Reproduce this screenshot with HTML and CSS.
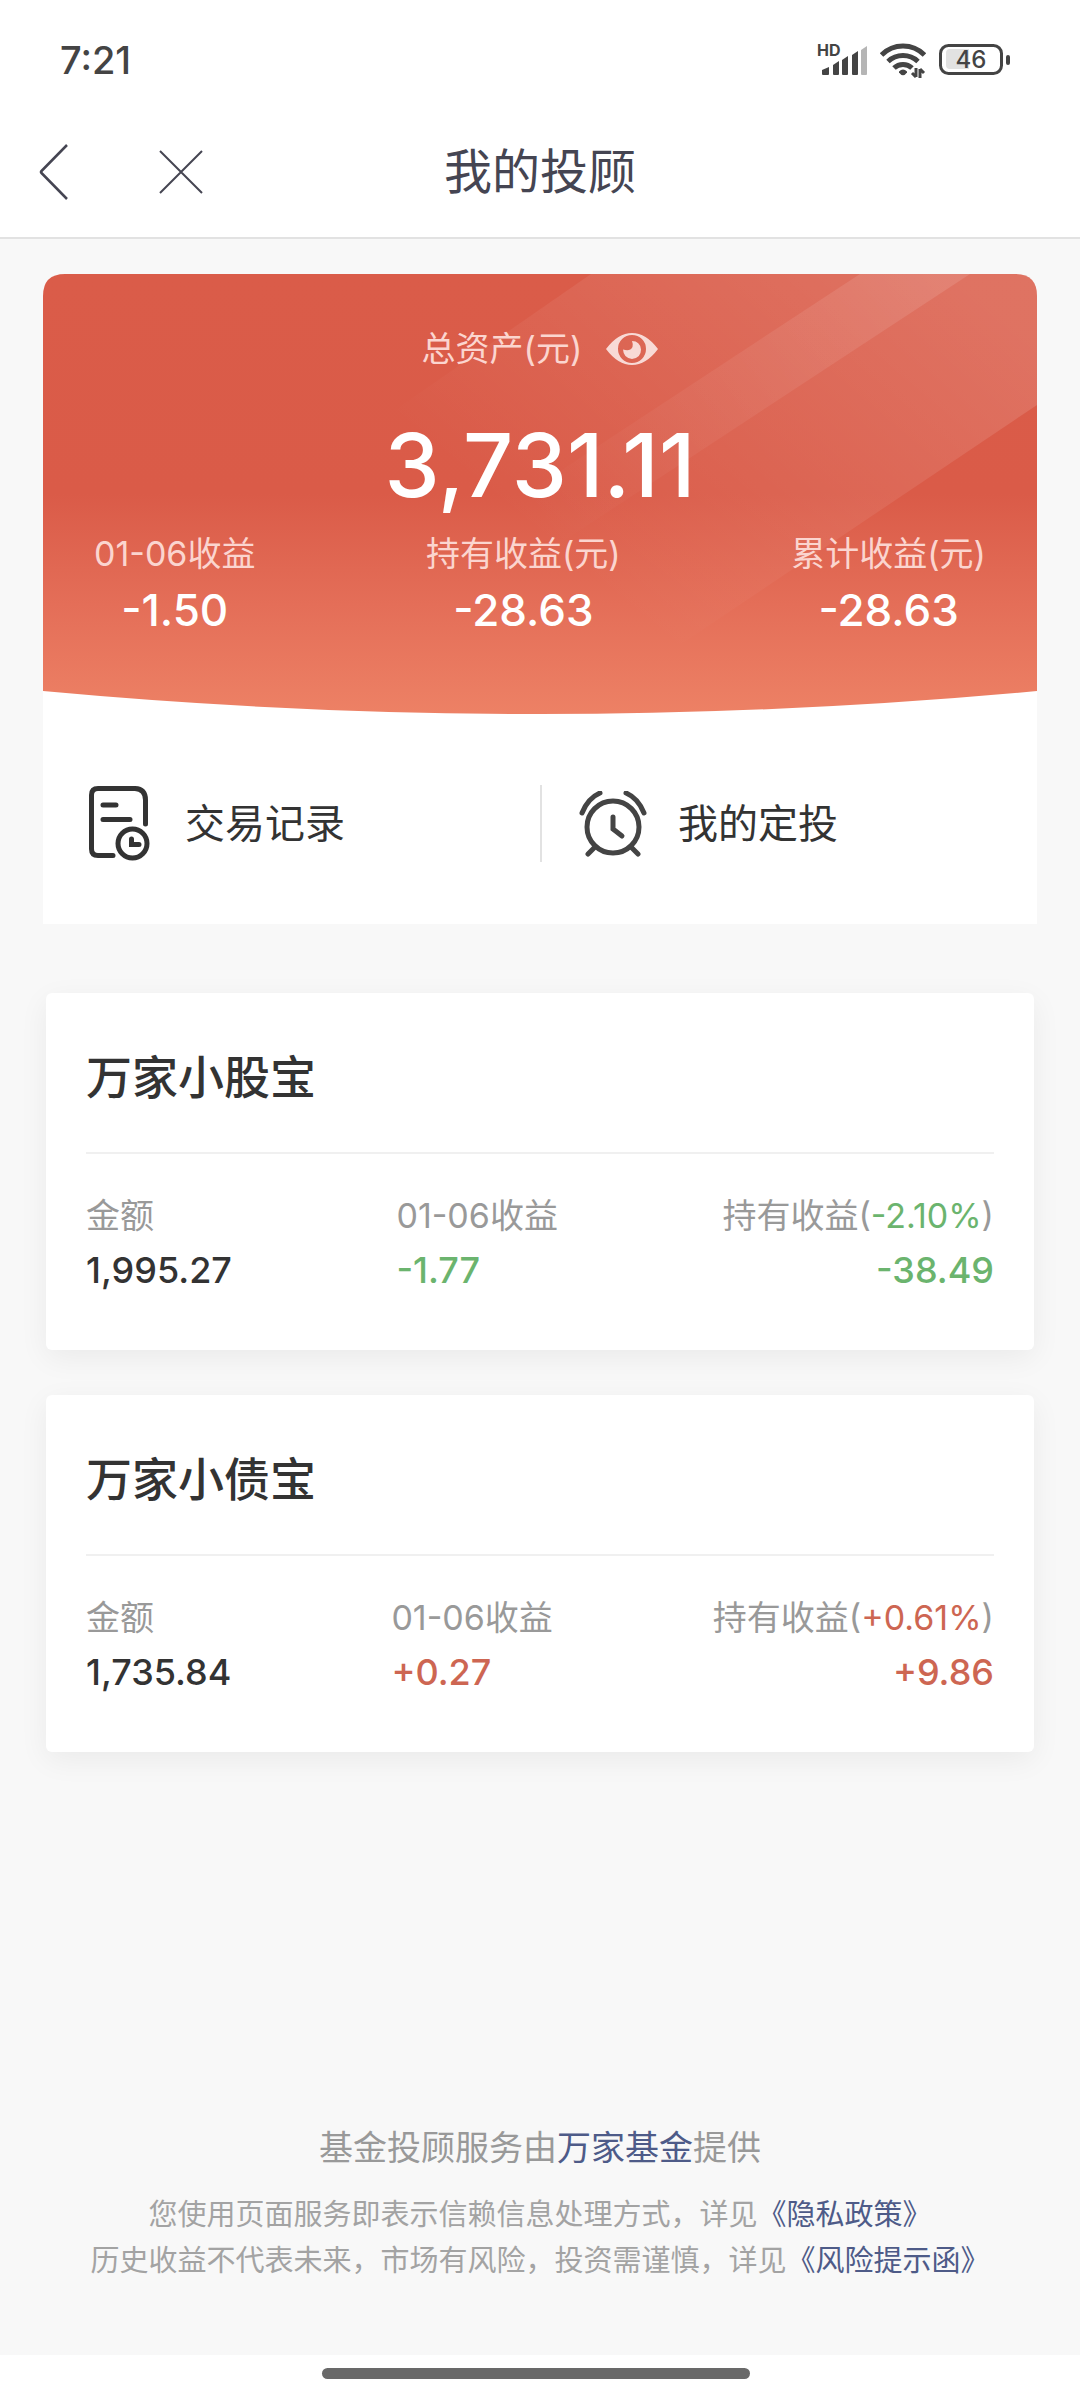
FILE: index.html
```html
<!DOCTYPE html>
<html lang="zh-CN">
<head>
<meta charset="utf-8">
<meta name="viewport" content="width=device-width, initial-scale=1">
<title>我的投顾</title>
<link rel="stylesheet" href="styles.css">
</head>
<body>
<div class="app">
  <div class="status">
    <span class="status-time">7:21</span>
    <div class="status-icons">
      <svg width="50" height="44" viewBox="0 -5 50 44" aria-hidden="true">
        <text class="hd" x="0" y="13">HD</text>
        <g fill="#444">
          <path d="M5 31V27L12 24V31Q12 32 11 32H6Q5 32 5 31Z"/>
          <path d="M16 31V22L22 18V31Q22 32 21 32H17Q16 32 16 31Z"/>
          <path d="M25 31V17L31 13V31Q31 32 30 32H26Q25 32 25 31Z"/>
          <path d="M35 31V12L41 8V31Q41 32 40 32H36Q35 32 35 31Z"/>
        </g>
        <path fill="#b5b5b5" d="M44 31V7L50 3V31Q50 32 49 32H45Q44 32 44 31Z"/>
      </svg>
      <svg width="46" height="36" viewBox="0 0 46 36" aria-hidden="true">
        <g fill="none" stroke="#444" stroke-width="5">
          <path d="M1.500 13A30 30 0 0 1 44.500 13"/>
          <path d="M8 19.500A22 22 0 0 1 38 19.500"/>
          <path d="M14 26A13 13 0 0 1 32 26"/>
        </g>
        <path d="M19 29.500Q23 25.500 27 29.500L27 30.500Q23 36 19 30.500Z" fill="#444"/>
        <path d="M36 26V35M36 35L32 31M40 36V27M40 27L44 31" fill="none" stroke="#444" stroke-width="3"/>
      </svg>
      <svg width="72" height="32" viewBox="0 0 72 32" aria-hidden="true">
        <rect x="1.500" y="1.500" width="61" height="28" rx="8" fill="none" stroke="#444" stroke-width="3"/>
        <path d="M30 5H11Q7 5 7 9V21Q7 25 11 25H30Z" fill="#e2e2e2"/>
        <rect x="67" y="11" width="4" height="10" rx="2" fill="#444"/>
        <text class="level" x="32" y="24" text-anchor="middle">46</text>
      </svg>
    </div>
  </div>

  <header class="nav">
    <div class="nav-side">
      <button class="icon-button" type="button" aria-label="返回">
        <svg width="30" height="58" viewBox="0 0 30 58" aria-hidden="true"><path d="M28 2L2.500 28Q1.500 29 2.500 30L28 56" fill="none" stroke="#454552" stroke-width="2.500"/></svg>
      </button>
      <button class="icon-button" type="button" aria-label="关闭">
        <svg width="44" height="44" viewBox="0 0 44 44" aria-hidden="true"><path d="M1 1L43 43M43 1L1 43" fill="none" stroke="#454552" stroke-width="2"/></svg>
      </button>
    </div>
    <h1 class="nav-title">我的投顾</h1>
    <div class="nav-side"></div>
  </header>

  <main class="content">
    <section class="overview">
      <div class="hero">
        <svg class="hero-art" viewBox="0 0 994 440" preserveAspectRatio="none" aria-hidden="true">
          <defs>
            <linearGradient id="base" x1="0" y1="0" x2="0" y2="1">
              <stop offset="0" stop-color="#da5c49"/>
              <stop offset="0.500" stop-color="#da5b48"/>
              <stop offset="0.750" stop-color="#e46e58"/>
              <stop offset="1" stop-color="#ed8165"/>
            </linearGradient>
            <linearGradient id="wide" gradientUnits="userSpaceOnUse" x1="860" y1="-40" x2="560" y2="320">
              <stop offset="0" stop-color="#fff" stop-opacity="0.140"/>
              <stop offset="1" stop-color="#fff" stop-opacity="0"/>
            </linearGradient>
            <linearGradient id="narrow" gradientUnits="userSpaceOnUse" x1="880" y1="0" x2="500" y2="260">
              <stop offset="0" stop-color="#fff" stop-opacity="0.110"/>
              <stop offset="1" stop-color="#fff" stop-opacity="0"/>
            </linearGradient>
            <clipPath id="shape"><path d="M0 22Q0 0 22 0H972Q994 0 994 22V417Q497 463 0 417Z"/></clipPath>
          </defs>
          <g clip-path="url(#shape)">
            <rect width="994" height="440" fill="url(#base)"/>
            <path d="M548 0H994V131L534 440H0V380Z" fill="url(#wide)"/>
            <path d="M817 0H927L257 440H147Z" fill="url(#narrow)"/>
          </g>
        </svg>
        <div class="hero-body">
          <div class="total-label">
            <span>总资产(元)</span>
            <button class="icon-button" type="button" aria-label="隐藏金额">
              <svg width="52" height="32" viewBox="0 0 52 32" aria-hidden="true">
                <path fill="#f8dad6" fill-rule="evenodd" d="M0 16Q12 0 26 0T52 16Q40 32 26 32T0 16ZM26 2A14 14 0 1 0 26 30A14 14 0 1 0 26 2Z"/>
                <path fill="#f8dad6" d="M26 8Q34 8 35 16.500Q35 25 26 26Q17.500 25 17 16.500Q24 19 26.500 14Q27 10 26 8Z"/>
              </svg>
            </button>
          </div>
          <div class="total-value">3,731.11</div>
          <dl class="hero-stats">
            <div class="hero-stat"><dt>01-06收益</dt><dd>-1.50</dd></div>
            <div class="hero-stat"><dt>持有收益(元)</dt><dd>-28.63</dd></div>
            <div class="hero-stat"><dt>累计收益(元)</dt><dd>-28.63</dd></div>
          </dl>
        </div>
      </div>
      <nav class="shortcuts">
        <a class="shortcut" href="#records">
          <svg width="62" height="76" viewBox="0 0 62 76" fill="none" stroke="#333" stroke-width="5" stroke-linecap="round" aria-hidden="true">
            <path d="M24 69.500H9Q2.500 69.500 2.500 63V9Q2.500 2.500 9 2.500H46Q56.500 3 56.500 14V38"/>
            <path d="M14 19H27M14 33.500H41"/>
            <circle cx="43.500" cy="57.500" r="14.500"/>
            <path d="M42.500 53V58.500H50"/>
          </svg>
          <span>交易记录</span>
        </a>
        <a class="shortcut shortcut-divided" href="#plans">
          <svg width="70" height="66" viewBox="0 0 70 66" fill="none" stroke="#444" stroke-width="5" stroke-linecap="round" aria-hidden="true">
            <circle cx="35" cy="36" r="26"/>
            <path d="M4 22Q10 7 22 2M48 2Q60 7 66 22M17 56L10 63M53 56L60 63" />
            <path d="M35 26V38L44 45"/>
          </svg>
          <span>我的定投</span>
        </a>
      </nav>
    </section>

    <section class="fund">
      <h2 class="fund-name">万家小股宝</h2>
      <dl class="fund-stats">
        <div><dt>金额</dt><dd>1,995.27</dd></div>
        <div><dt>01-06收益</dt><dd class="loss">-1.77</dd></div>
        <div class="fund-last"><dt>持有收益(<span class="loss">-2.10%</span>)</dt><dd class="loss">-38.49</dd></div>
      </dl>
    </section>

    <section class="fund">
      <h2 class="fund-name">万家小债宝</h2>
      <dl class="fund-stats">
        <div><dt>金额</dt><dd>1,735.84</dd></div>
        <div><dt>01-06收益</dt><dd class="gain">+0.27</dd></div>
        <div class="fund-last"><dt>持有收益(<span class="gain">+0.61%</span>)</dt><dd class="gain">+9.86</dd></div>
      </dl>
    </section>
  </main>

  <footer class="legal">
    <p class="provider">基金投顾服务由<a href="#company">万家基金</a>提供</p>
    <p class="notice">您使用页面服务即表示信赖信息处理方式，详见<a href="#privacy">《隐私政策》</a></p>
    <p class="notice">历史收益不代表未来，市场有风险，投资需谨慎，详见<a href="#risk">《风险提示函》</a></p>
  </footer>
  <div class="home-area"><div class="home-bar"></div></div>
</div>
</body>
</html>
```
FILE: styles.css
```css
* {
  box-sizing: border-box;
}

body,
h1,
h2,
p,
dl,
dd {
  margin: 0;
}

body {
  background: #f8f8f8;
  color: #333;
  font-family: "Inter", "Noto Sans CJK SC", sans-serif;
  font-size: 34px;
}

a {
  color: inherit;
  text-decoration: none;
}

svg {
  display: block;
  flex: none;
}

.app {
  display: flex;
  flex-direction: column;
  min-height: 100vh;
}

/* Status bar */
.status {
  display: flex;
  align-items: center;
  justify-content: space-between;
  height: 106px;
  padding: 14px 69px 0 60px;
  background: #fff;
}

.status-time {
  color: #444;
  font-size: 38px;
  font-weight: 500;
}

.status-icons {
  display: flex;
  align-items: center;
  gap: 13px;
}

.hd {
  fill: #444;
  font: 700 16px "Inter", sans-serif;
}

.level {
  fill: #444;
  font: 500 24px "Inter", sans-serif;
}

/* Title bar */
.nav {
  display: grid;
  grid-template-columns: 1fr auto 1fr;
  align-items: center;
  height: 133px;
  padding: 0 39px;
  border-bottom: 2px solid #e2e2e2;
  background: #fff;
}

.nav-side {
  display: flex;
  align-items: center;
  gap: 90px;
}

.nav-title {
  color: #454552;
  font-size: 48px;
  font-weight: 400;
  line-height: 64px;
}

.icon-button {
  padding: 0;
  border: 0;
  background: none;
}

/* Asset overview */
.content {
  padding: 35px 43px 0;
}

.hero {
  position: relative;
  background: #fff;
  border-radius: 22px 22px 0 0;
  color: #fff;
}

.hero-art {
  position: absolute;
  inset: 0;
  width: 100%;
  height: 100%;
}

.hero-body {
  position: relative;
  padding: 51px 51px 76px;
}

.total-label {
  display: flex;
  align-items: center;
  justify-content: center;
  gap: 24px;
  color: #fbd5cf;
  line-height: 48px;
}

.total-value {
  margin: 44px 0 17px;
  font-size: 88px;
  font-weight: 500;
  line-height: 96px;
  text-align: center;
}

.hero-stats {
  display: flex;
  justify-content: space-between;
  text-align: center;
}

.hero-stat dt {
  color: #fbd5cf;
  line-height: 48px;
}

.hero-stat dd {
  margin-top: 4px;
  font-size: 44px;
  font-weight: 500;
  line-height: 56px;
}

.shortcuts {
  display: grid;
  grid-template-columns: 1fr 1fr;
  padding: 71px 0 62px;
  background: #fff;
}

.shortcut {
  display: flex;
  align-items: center;
  gap: 34px;
  height: 77px;
  padding-left: 46px;
  font-size: 40px;
  line-height: 56px;
}

.shortcut-divided {
  gap: 30px;
  padding-left: 36px;
  border-left: 2px solid #e2e2e2;
}

/* Fund cards */
.fund {
  margin: 69px 3px 0;
  padding: 0 40px 52px;
  border-radius: 6px;
  background: #fff;
  box-shadow: 0 8px 30px rgb(0 0 0 / 6%);
}

.fund + .fund {
  margin-top: 45px;
}

.fund-name {
  padding: 52px 0 43px;
  border-bottom: 2px solid #f0f0f0;
  font-size: 46px;
  font-weight: 500;
  line-height: 64px;
}

.fund-stats {
  display: flex;
  justify-content: space-between;
  padding-top: 38px;
}

.fund-stats dt {
  color: #999;
  line-height: 48px;
}

.fund-stats dd {
  margin-top: 2px;
  font-size: 36px;
  font-weight: 500;
  line-height: 56px;
}

.fund-last {
  text-align: right;
}

.loss {
  color: #6bb46e;
}

.gain {
  color: #cd6652;
}

/* Legal notes */
.legal {
  margin-top: auto;
  padding: 0 40px 71px;
  color: #a3a3a3;
  text-align: center;
}

.legal a {
  color: #4e5b88;
}

.provider {
  margin-bottom: 20px;
  color: #999;
  line-height: 48px;
}

.notice {
  font-size: 29px;
  line-height: 46px;
}

.home-area {
  padding: 13px 8px 21px 0;
  background: #fff;
}

.home-bar {
  width: 428px;
  height: 11px;
  margin: 0 auto;
  border-radius: 6px;
  background: #696969;
}
```
